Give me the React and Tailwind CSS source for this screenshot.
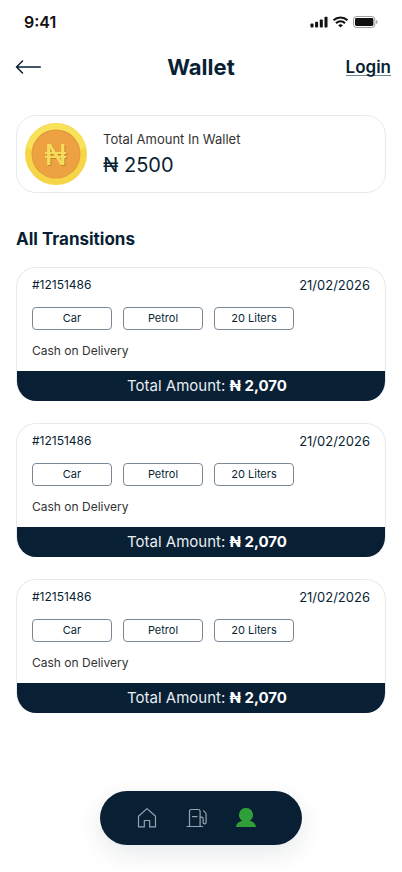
const transactions = [
  { id: 1, code: '#12151486', date: '21/02/2026', tags: ['Car', 'Petrol', '20 Liters'], payment: 'Cash on Delivery', total: '2,070' },
  { id: 2, code: '#12151486', date: '21/02/2026', tags: ['Car', 'Petrol', '20 Liters'], payment: 'Cash on Delivery', total: '2,070' },
  { id: 3, code: '#12151486', date: '21/02/2026', tags: ['Car', 'Petrol', '20 Liters'], payment: 'Cash on Delivery', total: '2,070' },
]

const StatusBar = () => (
  <div className="flex h-11 items-center justify-between px-6">
    <span className="text-base font-semibold leading-5 text-[#111]">9:41</span>
    <div className="flex items-center gap-1 text-[#111]">
      <svg width="18" height="12" viewBox="0 0 18 12" fill="currentColor" aria-hidden="true">
        <rect x="0.5" y="7.5" width="3" height="4" rx="0.8" />
        <rect x="5.1" y="5.8" width="3" height="5.7" rx="0.8" />
        <rect x="9.8" y="3.4" width="3" height="8.1" rx="0.8" />
        <rect x="14.5" y="0.8" width="3" height="10.7" rx="0.8" />
      </svg>
      <svg width="17" height="12" viewBox="0 0 17 12" fill="none" stroke="currentColor" strokeWidth="2" aria-hidden="true">
        <path d="M1.5 4.3a10.2 10.2 0 0 1 14 0" />
        <path d="M4 7.2a6.4 6.4 0 0 1 9 0" />
        <path d="M8.5 11.6 6.1 9.3a3.5 3.5 0 0 1 4.8 0Z" fill="currentColor" stroke="none" />
      </svg>
      <svg width="25" height="12" viewBox="0 0 25 12" aria-hidden="true">
        <rect x="0.5" y="0.5" width="21.4" height="11" rx="3" fill="none" stroke="#111" strokeOpacity="0.4" />
        <rect x="2" y="2" width="18.4" height="8" rx="1.4" fill="#111" />
        <path d="M23.2 4v4c.8-.3 1.3-1.1 1.3-2s-.5-1.7-1.3-2Z" fill="#111" fillOpacity="0.45" />
      </svg>
    </div>
  </div>
)

const Header = () => (
  <header className="grid grid-cols-[1fr_auto_1fr] items-center px-[11px] pt-2">
    <button type="button" aria-label="Back" className="ml-1 justify-self-start py-2">
      <svg width="26" height="14" viewBox="0 0 26 14" fill="none" stroke="#081f34" strokeWidth="1.5" strokeLinecap="round" strokeLinejoin="round">
        <path d="M25.3 7H1.5M7.5 1 1.5 7l6 6" />
      </svg>
    </button>
    <h1 className="text-[22px] font-bold leading-7">Wallet</h1>
    <a href="#login" className="justify-self-end border-b border-[#6b8790] text-[17px] font-semibold leading-4">
      Login
    </a>
  </header>
)

const Coin = () => (
  <svg width="62" height="62" viewBox="0 0 62 62" className="shrink-0" aria-hidden="true">
    <circle cx="31" cy="31" r="31" fill="#f7d548" />
    <path d="M1 25a30.6 30.6 0 0 1 60 0L31 31Z" fill="#f8e25a" />
    <circle cx="31" cy="31" r="24.5" fill="#dc963c" />
    <circle cx="31" cy="31.3" r="23.7" fill="#eda141" />
    <text
      x="30.5"
      y="42"
      textAnchor="middle"
      className="fill-[#f5dc5c] text-[29px] font-medium drop-shadow-[1px_1px_0_#c9822e]"
    >
      ₦
    </text>
  </svg>
)

const WalletCard = () => (
  <section className="mt-[33px] flex items-center gap-4 rounded-[20px] border border-[#e6ebef] px-2 py-[7px]">
    <Coin />
    <div>
      <p className="text-[13px] leading-5 text-[#333]">Total Amount In Wallet</p>
      <p className="mt-0.5 text-xl leading-7">₦ 2500</p>
    </div>
  </section>
)

const TransactionCard = ({ item }) => (
  <li className="overflow-hidden rounded-[20px] border border-b-0 border-[#e6ebef]">
    <div className="px-[15px] pb-3 pt-[7px]">
      <div className="flex justify-between">
        <span className="text-xs leading-5">{item.code}</span>
        <span className="text-[13px] leading-5">{item.date}</span>
      </div>
      <div className="mt-3 flex gap-[11px]">
        {item.tags.map((tag) => (
          <span
            key={tag}
            className="w-20 rounded border border-[#7b8996] text-center text-[11px] leading-[21px]"
          >
            {tag}
          </span>
        ))}
      </div>
      <p className="mt-[13px] text-xs leading-4 text-[#333]">{item.payment}</p>
    </div>
    <p className="bg-[#081f34] pl-3 text-center text-[15px] leading-[30px] text-[#e9edf0]">
      Total Amount: <span className="font-bold text-white">₦ {item.total}</span>
    </p>
  </li>
)

const BottomNav = () => (
  <nav className="mx-auto mb-[27px] mt-auto flex h-[54px] w-[202px] items-center gap-7 rounded-full bg-[#081f34] pl-9 shadow-[0_8px_24px_rgba(8,31,52,0.1)]">
    <a href="#home" aria-label="Home">
      <svg width="22" height="22" viewBox="0 0 22 22" fill="none" stroke="#98a3b0" strokeWidth="1.2" strokeLinejoin="round">
        <path d="M2.5 9.2 11 1.6l8.5 7.6v10.7h-5.8v-6.4H8.3v6.4H2.5Z" />
      </svg>
    </a>
    <a href="#fuel" aria-label="Fuel">
      <svg width="22" height="22" viewBox="0 0 22 22" fill="none" stroke="#98a3b0" strokeWidth="1.2" strokeLinecap="round" strokeLinejoin="round">
        <path d="M3.5 19.4V4.2c0-1.1.6-1.7 1.7-1.7h7.2c1.1 0 1.7.6 1.7 1.7v15.2M1 19.5h15.5M6.5 9.6H11" />
        <path d="M14.1 10.1h1.6c.9 0 1.4.5 1.4 1.4v3.7c0 1 .6 1.6 1.5 1.6s1.5-.6 1.5-1.6V7.4c0-.7-.2-1.2-.7-1.7l-1.8-1.9" />
      </svg>
    </a>
    <a href="#profile" aria-label="Profile">
      <svg width="20" height="22" viewBox="1 0 20 22" fill="#319f37">
        <path d="M11 1a6.9 6.9 0 0 1 3.8 12.7c3 .5 5.200 2.500 6.100 5.300.2.700-.1 1.100-.8 1.100H1.900c-.7 0-1-.4-.8-1.100.9-2.800 3.100-4.800 6.100-5.300A6.900 6.900 0 0 1 11 1Z" />
      </svg>
    </a>
  </nav>
)

const App = () => {
  return (
    <div className="flex min-h-screen flex-col bg-white font-['Inter',sans-serif] text-[#081f34]">
      <StatusBar />
      <Header />
      <main className="px-4 pb-8">
        <WalletCard />
        <h2 className="mt-8 text-[17px] font-bold leading-7">All Transitions</h2>
        <ul className="mt-3.5 flex flex-col gap-[22px]">
          {transactions.map((item) => (
            <TransactionCard key={item.id} item={item} />
          ))}
        </ul>
      </main>
      <BottomNav />
    </div>
  )
}

export default App
